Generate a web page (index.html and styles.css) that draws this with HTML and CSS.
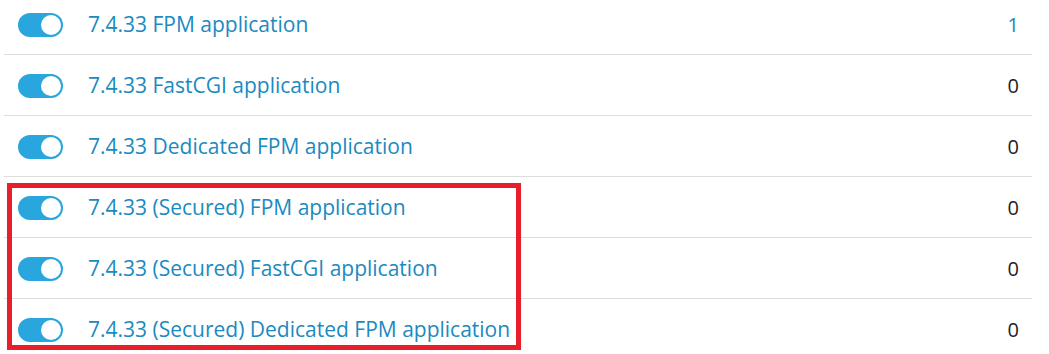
FILE: index.html
```html
<!DOCTYPE html>
<html lang="en">

<head>
    <meta charset="UTF-8">
    <meta name="viewport" content="width=device-width, initial-scale=1.0">
    <title>PHP handlers</title>
    <link rel="stylesheet" href="styles.css">
</head>

<body>
    <div class="list">
        <div class="row">
            <span class="toggle"><span class="knob"></span></span>
            <a class="name" href="#">7.4.33 FPM application</a>
            <a class="count link" href="#">1</a>
        </div>
        <div class="row">
            <span class="toggle"><span class="knob"></span></span>
            <a class="name" href="#">7.4.33 FastCGI application</a>
            <span class="count">0</span>
        </div>
        <div class="row">
            <span class="toggle"><span class="knob"></span></span>
            <a class="name" href="#">7.4.33 Dedicated FPM application</a>
            <span class="count">0</span>
        </div>
        <div class="row">
            <span class="toggle"><span class="knob"></span></span>
            <a class="name" href="#">7.4.33 (Secured) FPM application</a>
            <span class="count">0</span>
        </div>
        <div class="row">
            <span class="toggle"><span class="knob"></span></span>
            <a class="name" href="#">7.4.33 (Secured) FastCGI application</a>
            <span class="count">0</span>
        </div>
        <div class="row">
            <span class="toggle"><span class="knob"></span></span>
            <a class="name" href="#">7.4.33 (Secured) Dedicated FPM application</a>
            <span class="count">0</span>
        </div>
    </div>

    <!-- highlight around the secured handlers -->
    <div class="highlight"></div>
</body>

</html>
```

FILE: styles.css
```css
body {
    margin: 0;
    font-family: "Open Sans", Arial, sans-serif;
    background-color: #fff;
    overflow: hidden;
}

.list {
    margin: -6px 17px 0 4px;
}

.row {
    display: flex;
    align-items: center;
    height: 60px;
    border-bottom: 1px solid #dddddd;
    padding: 0 13px 0 14px;
}

.toggle {
    display: flex;
    justify-content: flex-end;
    align-items: center;
    box-sizing: border-box;
    width: 45px;
    height: 24px;
    margin-top: 2px;
    padding: 2px;
    border-radius: 12px;
    background-color: #29a6de;
}

.knob {
    width: 20px;
    height: 20px;
    border-radius: 50%;
    background-color: #fff;
}

.name {
    margin-left: 25px;
    font-size: 21px;
    color: #1a8abf;
    text-decoration: none;
}

.count {
    margin-left: auto;
    font-size: 20px;
    color: #222;
}

.count.link {
    color: #1a8abf;
    text-decoration: none;
}

.highlight {
    position: absolute;
    left: 7px;
    top: 183px;
    width: 504px;
    height: 157px;
    border: 5px solid #e81e2a;
}
```
